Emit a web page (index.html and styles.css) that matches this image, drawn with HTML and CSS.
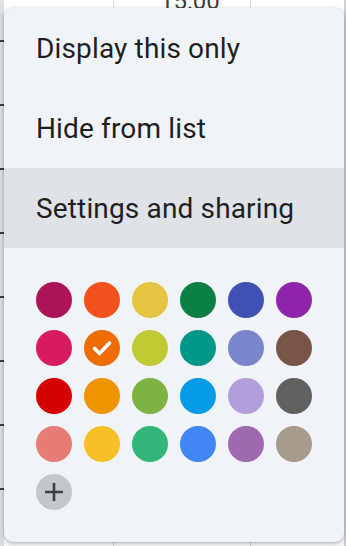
FILE: index.html
```html
<!DOCTYPE html>
<html>
<head>
<meta charset="utf-8">
<link rel="stylesheet" href="styles.css">
</head>
<body>
<div class="backdrop">
  <span class="time">15:00</span>
  <div class="menu">
    <ul class="items">
      <li class="item">Display this only</li>
      <li class="item">Hide from list</li>
      <li class="item active">Settings and sharing</li>
    </ul>
    <div class="palette">
      <span class="dot" style="background:#ad1457"></span>
      <span class="dot" style="background:#f4511e"></span>
      <span class="dot" style="background:#e4c441"></span>
      <span class="dot" style="background:#0b8043"></span>
      <span class="dot" style="background:#3f51b5"></span>
      <span class="dot" style="background:#8e24aa"></span>
      <span class="dot" style="background:#d81b60"></span>
      <span class="dot" style="background:#ef6c00">
        <svg viewBox="0 0 36 36" width="36" height="36"><path d="M10.5 18.5l5 5 10-10.5" fill="none" stroke="#fff" stroke-width="3.6" stroke-linecap="round" stroke-linejoin="round"/></svg>
      </span>
      <span class="dot" style="background:#c0ca33"></span>
      <span class="dot" style="background:#009688"></span>
      <span class="dot" style="background:#7986cb"></span>
      <span class="dot" style="background:#795548"></span>
      <span class="dot" style="background:#d50000"></span>
      <span class="dot" style="background:#f09300"></span>
      <span class="dot" style="background:#7cb342"></span>
      <span class="dot" style="background:#039be5"></span>
      <span class="dot" style="background:#b39ddb"></span>
      <span class="dot" style="background:#616161"></span>
      <span class="dot" style="background:#e67c73"></span>
      <span class="dot" style="background:#f6bf26"></span>
      <span class="dot" style="background:#33b679"></span>
      <span class="dot" style="background:#4285f4"></span>
      <span class="dot" style="background:#9e69af"></span>
      <span class="dot" style="background:#a79b8e"></span>
      <span class="dot add">
        <svg viewBox="0 0 36 36" width="36" height="36"><path d="M18 9v18M9 18h18" stroke="#3c4043" stroke-width="2.6" fill="none"/></svg>
      </span>
    </div>
  </div>
</div>
</body>
</html>
```

FILE: styles.css
```css
html, body {
  margin: 0;
  padding: 0;
}
body {
  width: 346px;
  height: 546px;
  overflow: hidden;
  background: #fff;
  font-family: Roboto, "Noto Sans", sans-serif;
}
.backdrop {
  position: relative;
  width: 346px;
  height: 546px;
  padding: 8px 2px 0 4px;
  box-sizing: border-box;
  background-color: #fff;
  background-image:
    linear-gradient(to bottom, transparent 0, transparent 40px, #3c4043 40px, #3c4043 42px, transparent 42px),
    linear-gradient(#dfe1e4, #dfe1e4),
    linear-gradient(#cfd1d4, #cfd1d4),
    linear-gradient(#dadce0, #dadce0),
    linear-gradient(#dadce0, #dadce0);
  background-position: 0 0, 0 0, 344px 0, 113px 0, 250px 0;
  background-size: 4px 64px, 4px 100%, 2px 100%, 1px 100%, 1px 100%;
  background-repeat: repeat-y, no-repeat, no-repeat, no-repeat, no-repeat;
}
.time {
  position: absolute;
  left: 160px;
  top: -13px;
  font-size: 24px;
  color: #3c4043;
}
.menu {
  position: relative;
  width: 340px;
  height: 534px;
  background: #f0f3f8;
  border-radius: 9px;
  box-shadow: 0 1px 3px rgba(0,0,0,.25), 0 3px 8px 2px rgba(0,0,0,.1);
  display: flex;
  flex-direction: column;
}
.items {
  list-style: none;
  margin: 0;
  padding: 0;
}
.item {
  height: 80px;
  display: flex;
  align-items: center;
  padding-left: 32px;
  font-size: 28px;
  color: #1f1f1f;
  letter-spacing: 0.15px;
}
.item.active {
  background: #dfe3e8;
}
.palette {
  display: grid;
  grid-template-columns: repeat(6, 36px);
  gap: 12px;
  padding: 34px 0 0 32px;
}
.dot {
  width: 36px;
  height: 36px;
  border-radius: 50%;
  display: block;
}
.dot svg {
  display: block;
}
.dot.add {
  background: #c4c7c8;
}
```
